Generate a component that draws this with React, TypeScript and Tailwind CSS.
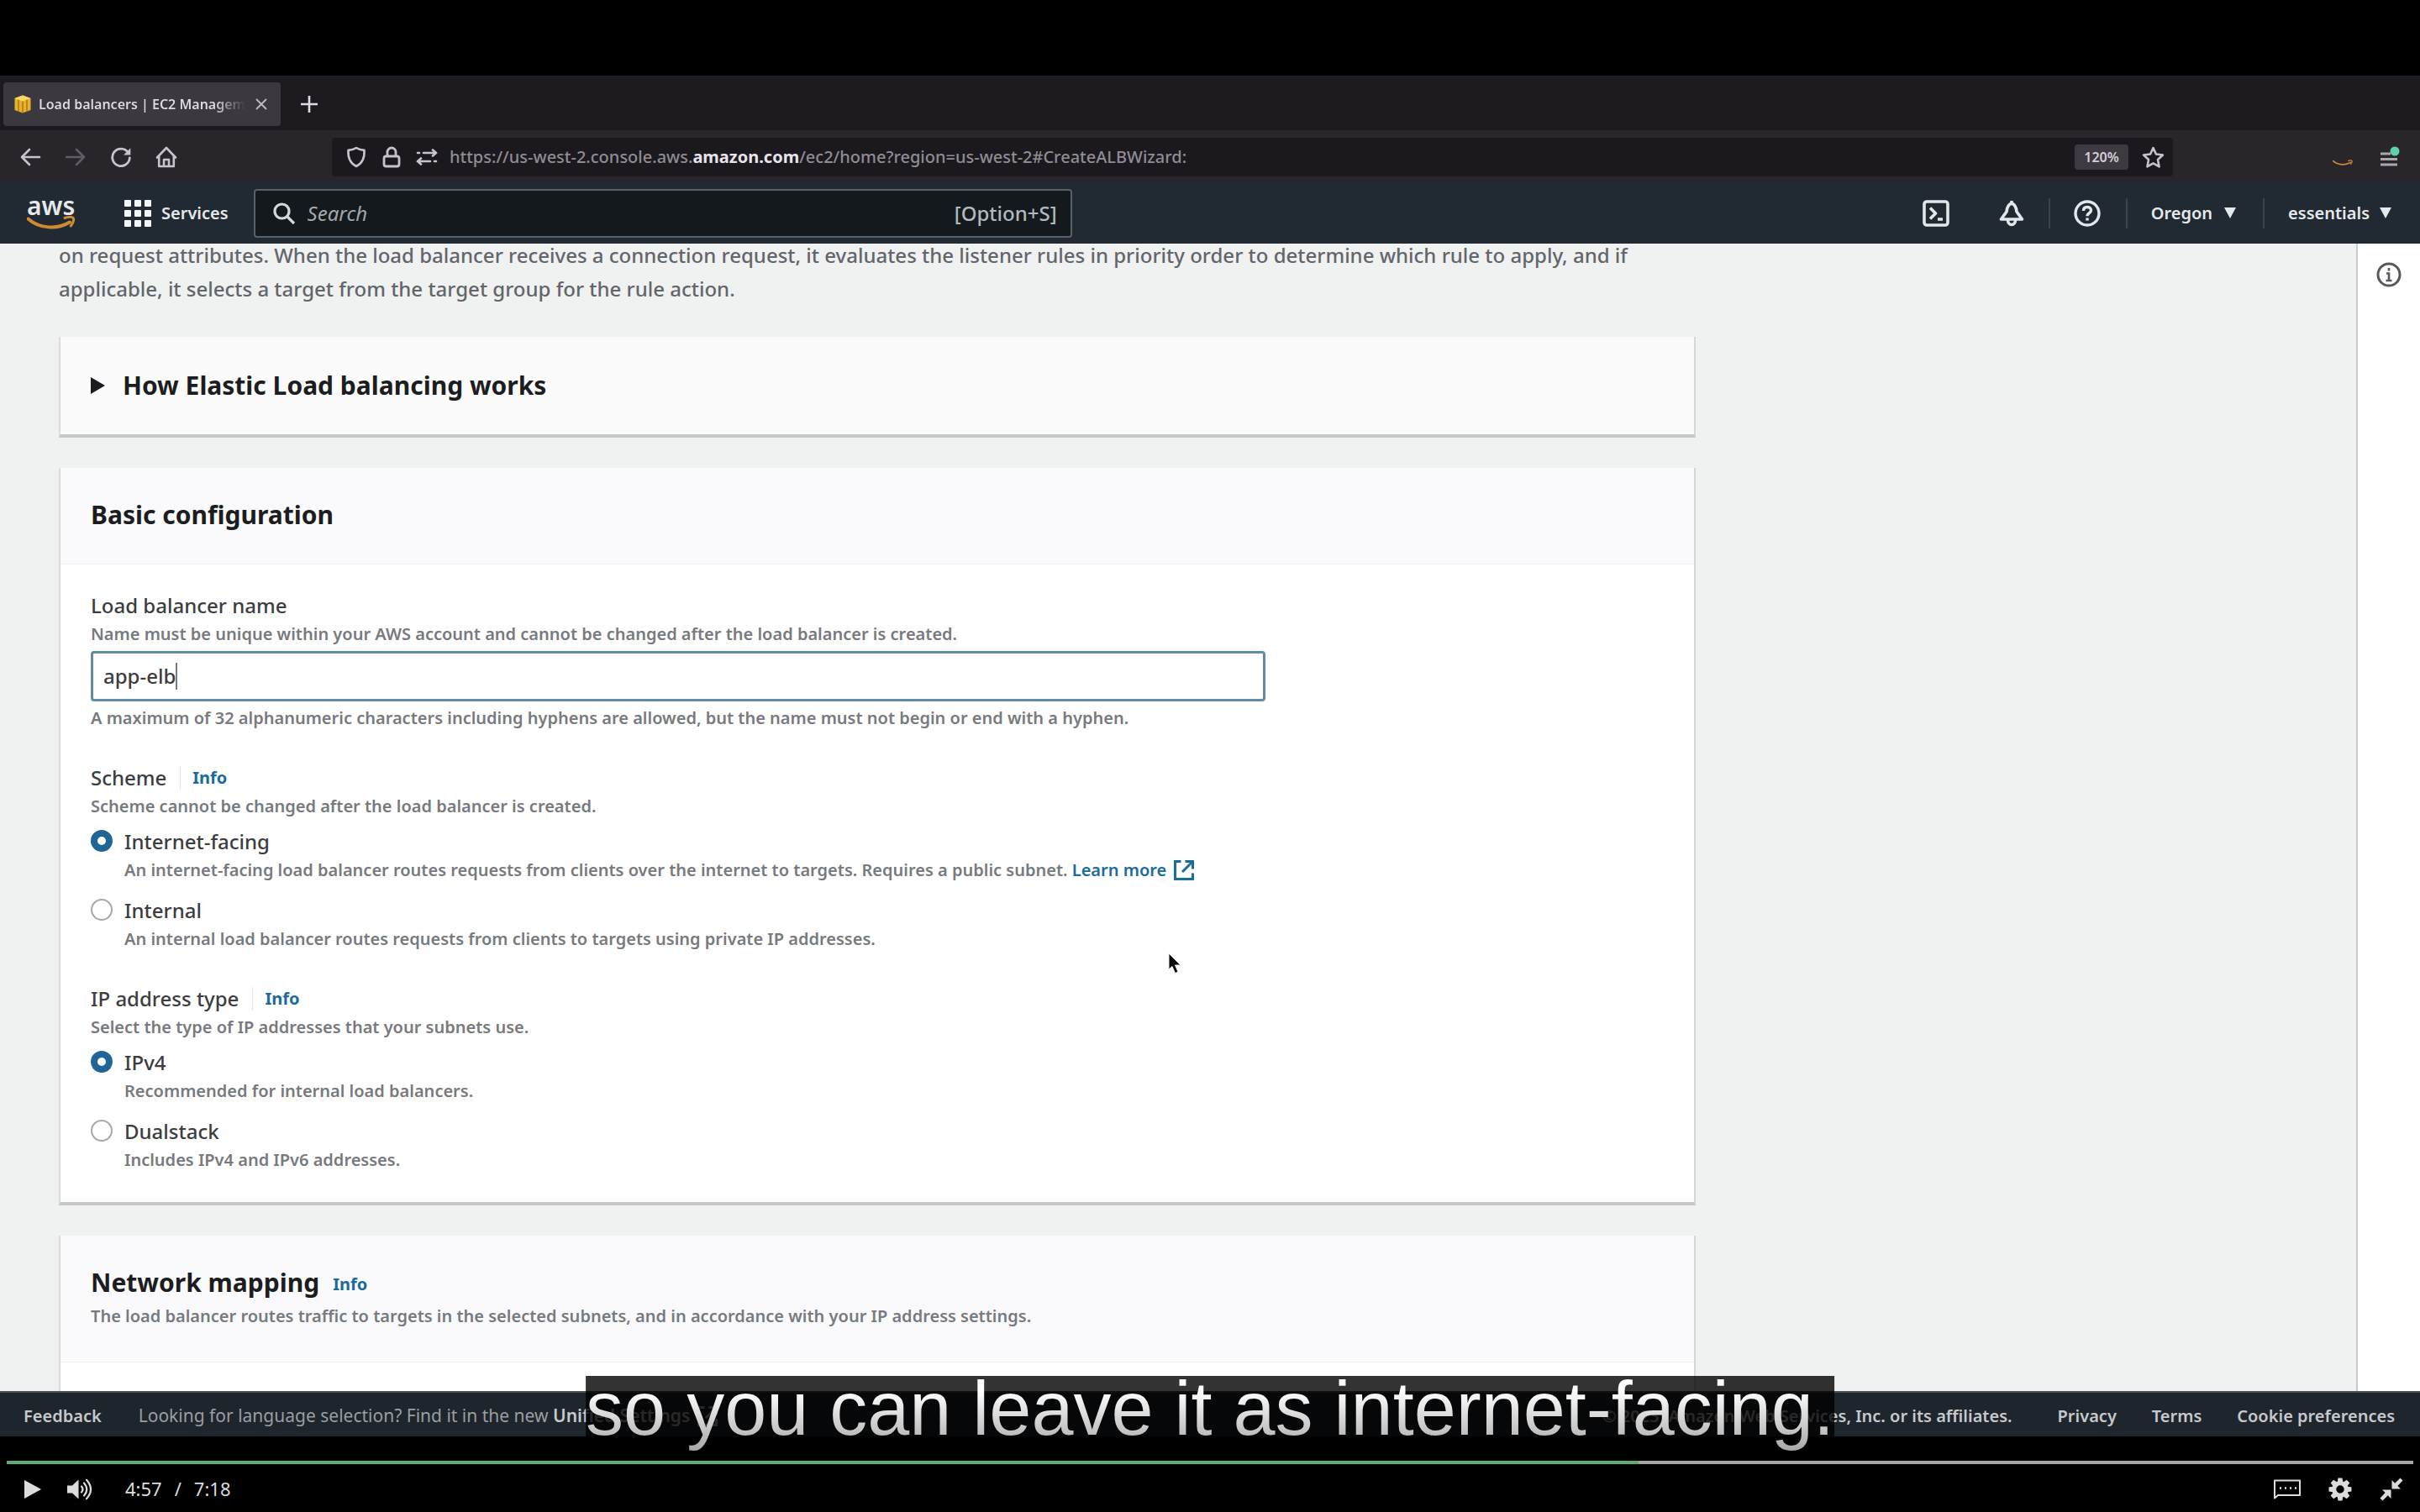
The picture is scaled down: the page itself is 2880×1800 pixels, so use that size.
import React, { useState } from "react";

const FONT = "font-['Noto_Sans',sans-serif]";

type IconProps = { className?: string };

/* ---------- Browser icons ---------- */

function Favicon() {
  return (
    <svg viewBox="0 0 22 22" className="h-[22px] w-[22px] shrink-0" aria-hidden="true">
      <path d="M11 0.5 20.5 4v14L11 21.5 1.5 18V4z" fill="#e8b32c" />
      <path d="M11 0.5 20.5 4 11 7.5 1.5 4z" fill="#f7d862" />
      <path d="M11 7.5v14M6 5.8v13.6M16 5.8v13.6" stroke="#a87410" strokeWidth="1.4" fill="none" />
    </svg>
  );
}

function Arrow({ className = "" }: IconProps) {
  return (
    <svg viewBox="0 0 26 26" className={`h-[26px] w-[26px] ${className}`} fill="none" stroke="currentColor" strokeWidth="2.6" strokeLinecap="round" strokeLinejoin="round" aria-hidden="true">
      <path d="M24 13H3M12 4l-9 9 9 9" />
    </svg>
  );
}

function Reload() {
  return (
    <svg viewBox="0 0 26 26" className="h-[26px] w-[26px]" fill="none" stroke="currentColor" strokeWidth="2.8" strokeLinecap="round" aria-hidden="true">
      <path d="M21.5 7.5A10.3 10.3 0 1 0 23.3 14" />
      <path d="M24.3 2.2v8.2h-8.2z" fill="currentColor" stroke="none" />
    </svg>
  );
}

function Home() {
  return (
    <svg viewBox="0 0 26 26" className="h-[26px] w-[26px]" fill="none" stroke="currentColor" strokeWidth="2.6" strokeLinejoin="round" strokeLinecap="round" aria-hidden="true">
      <path d="M2 13.5 13 2l11 11.5M4.2 12v12h17.6V12" />
      <path d="M10 23.5V16h6v7.5" />
    </svg>
  );
}

function ShieldIcon() {
  return (
    <svg viewBox="0 0 26 26" className="h-[26px] w-[26px]" fill="none" stroke="currentColor" strokeWidth="2.6" strokeLinejoin="round" aria-hidden="true">
      <path d="M13 2c3 2 6.5 2.7 9.5 2.9.6 8.5-2.6 15.6-9.5 19.1C6.1 20.5 2.9 13.4 3.5 4.9 6.5 4.7 10 4 13 2z" />
    </svg>
  );
}

function LockIcon() {
  return (
    <svg viewBox="0 0 26 26" className="h-[26px] w-[26px]" fill="none" stroke="currentColor" strokeWidth="2.8" strokeLinejoin="round" aria-hidden="true">
      <rect x="4" y="12" width="18" height="12" rx="2.5" />
      <path d="M8 12V7a5 5 0 0 1 10 0v5" />
    </svg>
  );
}

function PermissionsIcon() {
  return (
    <svg viewBox="0 0 26 26" className="h-[26px] w-[26px]" fill="none" stroke="currentColor" strokeWidth="2.6" strokeLinecap="round" aria-hidden="true">
      <path d="M9 8h15M20 4.5 24 8l-4 3.5M2 8h2M17 18H2M6 14.5 2 18l4 3.5M22 18h2" />
    </svg>
  );
}

function StarIcon() {
  return (
    <svg viewBox="0 0 26 26" className="h-[27px] w-[27px]" fill="none" stroke="currentColor" strokeWidth="2.5" strokeLinejoin="round" aria-hidden="true">
      <path d="m13 2 3.3 7.2 7.7.9-5.7 5.3 1.5 8.1L13 19.7l-6.8 3.8 1.5-8.1L2 10.1l7.7-.9z" />
    </svg>
  );
}

function Smile({ className = "" }: IconProps) {
  return (
    <svg viewBox="0 0 58 18" className={className} fill="none" stroke="#d08a32" aria-hidden="true">
      <path d="M1.5 3.5C15 15.5 36 16.5 51 7.5" strokeWidth="4" strokeLinecap="round" />
      <path d="M45 2.5c4.5-1.3 9-1.2 10.3.3 1 1.3-.4 6-3 9.2" strokeWidth="3" strokeLinecap="round" />
    </svg>
  );
}

function MenuIcon() {
  return (
    <svg viewBox="0 0 24 26" className="h-[26px] w-[24px]" aria-hidden="true">
      <path d="M1 9h12M1 15.5h20M1 22h20" stroke="#a9a7ad" strokeWidth="3" fill="none" />
      <circle cx="18" cy="6" r="5.5" fill="#5fd0a8" />
    </svg>
  );
}

/* ---------- Console icons ---------- */

function GridIcon() {
  const steps = [0, 12, 24];
  return (
    <svg viewBox="0 0 32 32" className="h-8 w-8" fill="#f2f4f5" aria-hidden="true">
      {steps.map((y) => steps.map((x) => <rect key={`${x}-${y}`} x={x} y={y} width="8" height="8" rx="1" />))}
    </svg>
  );
}

function SearchIcon() {
  return (
    <svg viewBox="0 0 28 28" className="h-7 w-7 shrink-0" fill="none" stroke="#d5d8da" strokeWidth="3.2" aria-hidden="true">
      <circle cx="11.5" cy="11.5" r="8.5" />
      <path d="m17.5 17.5 8.500 8.500" />
    </svg>
  );
}

function TerminalIcon() {
  return (
    <svg viewBox="0 0 32 32" className="h-8 w-8" fill="none" stroke="#e3e7ea" strokeWidth="3.6" strokeLinejoin="round" aria-hidden="true">
      <rect x="2" y="2" width="28" height="28" rx="3" />
      <path d="m9 9.5 6.5 6.5L9 22.5M18 23h6" />
    </svg>
  );
}

function BellIcon() {
  return (
    <svg viewBox="0 0 32 32" className="h-8 w-8" fill="none" stroke="#e3e7ea" strokeWidth="3.6" strokeLinejoin="round" aria-hidden="true">
      <path d="M16 4c-4.5 1.500-5.500 5-6 10L3.500 23h25L22 14c-.5-5-1.500-8.500-6-10z" />
      <path d="M16 1v3M11.500 24a4.500 5.500 0 0 0 9 0" />
    </svg>
  );
}

function HelpIcon() {
  return (
    <svg viewBox="0 0 32 32" className="h-8 w-8" fill="none" stroke="#e3e7ea" strokeWidth="3.4" aria-hidden="true">
      <circle cx="16" cy="16" r="14" />
      <path d="M11.5 13c0-3 2-4.500 4.500-4.500s4.500 1.500 4.500 4c0 3-4.500 3.300-4.500 6.700M16 21.500v3" />
    </svg>
  );
}

function Caret({ className = "" }: IconProps) {
  return (
    <svg viewBox="0 0 14 13" className={`h-[13px] w-[14px] ${className}`} fill="currentColor" aria-hidden="true">
      <path d="M0 0h14L7 13z" />
    </svg>
  );
}

function InfoIcon() {
  return (
    <svg viewBox="0 0 30 30" className="h-[30px] w-[30px]" fill="none" stroke="#55595e" strokeWidth="3" aria-hidden="true">
      <circle cx="15" cy="15" r="13" />
      <path d="M15 7v3.5M12 13.5h3V22M11.5 22h7" strokeWidth="2.6" />
    </svg>
  );
}

function ExternalIcon() {
  return (
    <svg viewBox="0 0 26 26" className="h-[26px] w-[26px]" fill="none" stroke="currentColor" strokeWidth="3" aria-hidden="true">
      <path d="M9.5 2.5h-7v21h21v-7M14.5 2.5h9v9M23 3 11 15" />
    </svg>
  );
}

/* ---------- Player icons ---------- */

function PlayIcon() {
  return (
    <svg viewBox="0 0 22 22" className="h-[22px] w-[22px]" fill="#dcdcdc" aria-hidden="true">
      <path d="M1 0v22l20-11z" />
    </svg>
  );
}

function VolumeIcon() {
  return (
    <svg viewBox="0 0 32 26" className="h-[26px] w-8" fill="none" stroke="#dcdcdc" strokeWidth="2.2" strokeLinecap="round" aria-hidden="true">
      <path d="M1 8.5h6L14.5 1.5v23L7 17.5H1z" fill="#dcdcdc" stroke="none" />
      <path d="M18 9.5q3 3.5 0 7M21 5.5q6.5 7.5 0 15M24 1.8q10 11.2 0 22.4" />
    </svg>
  );
}

function CaptionsIcon() {
  return (
    <svg viewBox="0 0 32 24" className="h-6 w-8" fill="none" stroke="#dcdcdc" strokeWidth="2" strokeLinejoin="round" aria-hidden="true">
      <path d="M1 1.5h30v17.5H5L1 22.5z" />
      <path d="M7 10.5h2M13 10.5h2M19 10.5h2M25 10.5h2" strokeWidth="2.6" />
    </svg>
  );
}

function GearIcon() {
  const teeth = [0, 45, 90, 135, 180, 225, 270, 315];
  return (
    <svg viewBox="0 0 28 28" className="h-7 w-7" aria-hidden="true">
      <g fill="#dcdcdc">
        {teeth.map((a) => (
          <path key={a} d="M10.5 6 11.5 0.5h5L17.5 6z" transform={`rotate(${a} 14 14)`} />
        ))}
      </g>
      <circle cx="14" cy="14" r="7.2" fill="none" stroke="#dcdcdc" strokeWidth="5" />
    </svg>
  );
}

function ShrinkIcon() {
  return (
    <svg viewBox="0 0 28 28" className="h-7 w-7" fill="#dcdcdc" aria-hidden="true">
      <path d="M14.5 3v10.5H25l-3.6-3.6L27.5 3.5 24.5.5l-6.3 6.2z" />
      <path d="M13.5 25V14.5H3l3.6 3.6L.5 24.5l3 3 6.3-6.2z" />
    </svg>
  );
}

function Pointer() {
  return (
    <svg viewBox="0 0 16 26" className="absolute top-[844px] left-[1390px] h-[26px] w-4" aria-hidden="true">
      <path d="M1 1v19l4-3.5 3.5 8 3.5-1.5-3.5-8H15z" fill="#0b0b0b" stroke="#f2f2f2" strokeWidth="1" />
    </svg>
  );
}

/* ---------- Browser chrome ---------- */

function TabStrip() {
  return (
    <div className="flex h-[65px] items-center bg-[#1c1a1f] pt-0.5 pl-1 text-[#dedce2]">
      <div className="flex h-[52px] w-[330px] items-center rounded-sm bg-[#3b383f] pr-4 pl-3">
        <Favicon />
        <span className="ml-2 bg-linear-to-r from-[#dedce2] from-85% to-[#3b383f] bg-clip-text text-base font-semibold whitespace-nowrap text-transparent">
          Load balancers | EC2 Managem
        </span>
        <button type="button" aria-label="Close tab" className="ml-auto">
          <svg viewBox="0 0 14 14" className="h-3.5 w-3.5" stroke="#bdbbc2" strokeWidth="1.8" aria-hidden="true">
            <path d="m1 1 12 12M13 1 1 13" />
          </svg>
        </button>
      </div>
      <button type="button" aria-label="New tab" className="ml-6">
        <svg viewBox="0 0 20 20" className="h-5 w-5" stroke="#dedce2" strokeWidth="2.6" aria-hidden="true">
          <path d="M10 0v20M0 10h20" />
        </svg>
      </button>
    </div>
  );
}

function Toolbar() {
  return (
    <div className="flex h-[62px] items-center bg-[#28252b] pt-0.5 pr-6 pl-[23px] text-[#c6c4ca]">
      <div className="flex w-[372px] items-center gap-7">
        <button type="button" aria-label="Back"><Arrow /></button>
        <button type="button" aria-label="Forward"><Arrow className="rotate-180 text-[#5f5c64]" /></button>
        <button type="button" aria-label="Reload"><Reload /></button>
        <button type="button" aria-label="Home"><Home /></button>
      </div>
      <div className="flex h-[46px] min-w-0 flex-1 items-center rounded bg-[#1b191e] pr-2.5 pl-4">
        <div className="flex shrink-0 items-center gap-4">
          <ShieldIcon />
          <LockIcon />
          <PermissionsIcon />
        </div>
        <span className="ml-3.5 flex-1 overflow-hidden text-xl font-medium whitespace-nowrap text-[#8f8c94]">
          https://us-west-2.console.aws.
          <span className="font-bold text-[#e6e4ea]">amazon.com</span>
          /ec2/home?region=us-west-2#CreateALBWizard:
        </span>
        <button type="button" className="mr-4 h-[30px] w-[64px] rounded bg-[#3d3a42] text-base font-semibold text-[#d2d0d6]">120%</button>
        <button type="button" aria-label="Bookmark this page"><StarIcon /></button>
      </div>
      <button type="button" aria-label="Extension" className="ml-[190px] pt-3.5"><Smile className="h-2.5 w-6" /></button>
      <button type="button" aria-label="Open menu" className="ml-8"><MenuIcon /></button>
    </div>
  );
}

/* ---------- Console header and footer ---------- */

function ConsoleHeader() {
  return (
    <header className="flex h-[73px] items-center bg-[#212a33] pl-8 text-xl font-semibold text-[#e6e9eb]">
      <a href="#home" aria-label="AWS home" className="flex w-[60px] flex-col">
        <span className="text-3xl leading-6">aws</span>
        <Smile className="h-[18px] w-[58px]" />
      </a>
      <button type="button" className="ml-14 flex items-center gap-3">
        <GridIcon />
        Services
      </button>
      <label className="ml-[30px] flex h-[58px] w-[974px] items-center rounded border-2 border-[#596066] bg-[#13191d] pr-4 pl-5 font-normal">
        <SearchIcon />
        <input type="search" aria-label="Search" placeholder="Search" className="ml-3.5 min-w-0 flex-1 bg-transparent text-2xl italic outline-none placeholder:text-[#a3a8ab]" />
        <span className="text-2xl font-medium text-[#b4b9bc]">[Option+S]</span>
      </label>
      <div className="ml-auto flex items-center">
        <button type="button" aria-label="CloudShell" className="mr-[58px]"><TerminalIcon /></button>
        <button type="button" aria-label="Notifications" className="mr-7"><BellIcon /></button>
        <span className="mr-7 h-9 border-l-2 border-[#39434d]" />
        <button type="button" aria-label="Help" className="mr-[30px]"><HelpIcon /></button>
        <span className="mr-7 h-9 border-l-2 border-[#39434d]" />
        <button type="button" className="mr-8 flex items-center gap-3.5">Oregon<Caret /></button>
        <span className="mr-7 h-9 border-l-2 border-[#39434d]" />
        <button type="button" className="mr-[34px] flex items-center gap-3">essentials<Caret /></button>
      </div>
    </header>
  );
}

function ConsoleFooter() {
  return (
    <footer className="flex h-[54px] shrink-0 items-center border-t-2 border-[#4a5258] bg-[#1e252c] pt-1 pr-[30px] pl-7 text-xl font-semibold whitespace-nowrap text-[#c6c9cc]">
      <a href="#feedback">Feedback</a>
      <p className="ml-11 text-[21px] font-normal text-[#999ea2]">
        Looking for language selection? Find it in the new{" "}
        <a href="#settings" className="inline-flex items-center gap-2 font-semibold text-[#c6c9cc]">
          Unified Settings
          <ExternalIcon />
        </a>
      </p>
      <span className="ml-auto">© 2023, Amazon Web Services, Inc. or its affiliates.</span>
      <a href="#privacy" className="ml-[54px]">Privacy</a>
      <a href="#terms" className="ml-[42px]">Terms</a>
      <a href="#cookies" className="ml-[42px]">Cookie preferences</a>
    </footer>
  );
}

/* ---------- Page content ---------- */

const HINT = "text-xl leading-8 font-semibold text-[#777a7e]";
const LABEL = "text-2xl leading-9 font-medium text-[#3b3d41]";
const CARD = "border-b-4 border-l-2 border-b-[#c6c7ca] border-l-[#dcdcdf] border-r-2 border-r-[#d6d7da] bg-white";

function InfoLink({ className = "" }: IconProps) {
  return <a href="#info" className={`text-xl font-bold text-[#1b6b9c] ${className}`}>Info</a>;
}

type Choice = { value: string; label: string; hint: React.ReactNode };

function RadioSet({ name, title, hint, choices, initial }: { name: string; title: string; hint: string; choices: Choice[]; initial: string }) {
  const [selected, setSelected] = useState(initial);
  return (
    <div role="radiogroup" aria-labelledby={`${name}-title`}>
      <div className="flex h-9 items-center">
        <span id={`${name}-title`} className={LABEL}>{title}</span>
        <InfoLink className="ml-4 border-l border-[#e4e5e7] pl-3.5" />
      </div>
      <p className={HINT}>{hint}</p>
      <div className="mt-2 flex flex-col gap-3.5">
        {choices.map((c) => (
          <div key={c.value} className="flex items-start gap-3.5">
            <input
              type="radio"
              id={`${name}-${c.value}`}
              name={name}
              checked={selected === c.value}
              onChange={() => setSelected(c.value)}
              className="mt-1 h-[26px] w-[26px] shrink-0 appearance-none rounded-full border-2 border-[#a5a8ac] bg-white checked:border-8 checked:border-[#1f6596]"
            />
            <div>
              <label htmlFor={`${name}-${c.value}`} className={`block ${LABEL}`}>{c.label}</label>
              <p className={HINT}>{c.hint}</p>
            </div>
          </div>
        ))}
      </div>
    </div>
  );
}

const schemes: Choice[] = [
  {
    value: "internet-facing",
    label: "Internet-facing",
    hint: (
      <>
        An internet-facing load balancer routes requests from clients over the internet to targets. Requires a public subnet.{" "}
        <a href="#learn" className="inline-flex h-8 items-center gap-2 align-top text-[#1b6b9c]">
          Learn more
          <ExternalIcon />
        </a>
      </>
    ),
  },
  { value: "internal", label: "Internal", hint: "An internal load balancer routes requests from clients to targets using private IP addresses." },
];

const ipTypes: Choice[] = [
  { value: "ipv4", label: "IPv4", hint: "Recommended for internal load balancers." },
  { value: "dualstack", label: "Dualstack", hint: "Includes IPv4 and IPv6 addresses." },
];

function Content() {
  const heading = "text-3xl leading-10 font-bold text-[#1c1d21]";
  return (
    <div className="relative flex min-h-0 flex-1 overflow-hidden bg-[#f0f1f1]">
      <main className="min-w-0 flex-1 pr-[786px] pl-[70px]">
        <p className="-mt-1.5 text-2xl leading-10 font-medium text-[#62666b]">
          on request attributes. When the load balancer receives a connection request, it evaluates the listener rules in priority order to determine which rule to apply, and if applicable, it selects a target from the target group for the rule action.
        </p>

        <section className={`mt-[37px] bg-[#fbfbfc] ${CARD}`}>
          <button type="button" className="flex w-full items-center bg-[#fbfbfc] py-[38px] pl-9 text-left">
            <svg viewBox="0 0 17 20" className="h-5 w-[17px]" fill="#1c1d21" aria-hidden="true">
              <path d="M0 0v20l17-10z" />
            </svg>
            <h2 className={`ml-[21px] ${heading}`}>How Elastic Load balancing works</h2>
          </button>
        </section>

        <section className={`mt-9 ${CARD}`}>
          <div className="border-b border-[#f0f0f2] bg-[#fafafc] px-9 pt-9 pb-[38px]">
            <h2 className={heading}>Basic configuration</h2>
          </div>
          <div className="flex flex-col gap-[37px] px-9 pt-[31px] pb-[34px]">
            <div className="flex w-[1398px] flex-col">
              <label htmlFor="lb-name" className={LABEL}>Load balancer name</label>
              <p className={HINT}>Name must be unique within your AWS account and cannot be changed after the load balancer is created.</p>
              <div className="mt-1 flex h-[60px] items-center rounded border-3 border-[#5f8ea3] bg-white px-3">
                <input id="lb-name" type="text" defaultValue="app-elb" className="field-sizing-content bg-transparent text-2xl font-medium text-[#3b3d41] outline-none" />
                <span className="h-8 border-l-2 border-[#777a7e]" />
              </div>
              <p className={`mt-1 ${HINT}`}>A maximum of 32 alphanumeric characters including hyphens are allowed, but the name must not begin or end with a hyphen.</p>
            </div>
            <RadioSet name="scheme" title="Scheme" hint="Scheme cannot be changed after the load balancer is created." choices={schemes} initial="internet-facing" />
            <RadioSet name="ip-type" title="IP address type" hint="Select the type of IP addresses that your subnets use." choices={ipTypes} initial="ipv4" />
          </div>
        </section>

        <section className={`mt-9 pb-40 ${CARD}`}>
          <div className="border-b border-[#f0f0f2] bg-[#fafafc] px-9 pt-9 pb-[38px]">
            <div className="flex items-center">
              <h2 className={heading}>Network mapping</h2>
              <InfoLink className="ml-4 pt-1" />
            </div>
            <p className={`mt-1 ${HINT}`}>The load balancer routes traffic to targets in the selected subnets, and in accordance with your IP address settings.</p>
          </div>
        </section>
      </main>
      <aside className="flex w-[76px] justify-center border-l-2 border-[#c9cbce] bg-white pt-[22px]">
        <button type="button" aria-label="Open help panel" className="h-[30px]"><InfoIcon /></button>
      </aside>
      <Pointer />
    </div>
  );
}

/* ---------- Video player ---------- */

function Captions() {
  return (
    <div className="absolute top-full left-1/2 -mt-[72px] h-[90px] -translate-x-1/2 bg-black/80 whitespace-nowrap">
      <span className="block h-[90px] bg-linear-to-b from-white from-20% to-[#a6a6a6] bg-clip-text font-['Liberation_Sans',sans-serif] text-[90px] leading-[78px] text-transparent">
        so you can leave it as internet-facing.
      </span>
    </div>
  );
}

function PlayerControls() {
  const [position, setPosition] = useState(297);
  const duration = 438;
  const percent = (position / duration) * 100;
  return (
    <div className="h-[90px] shrink-0 px-2 pt-[29px]">
      <input
        type="range"
        aria-label="Seek"
        min={0}
        max={duration}
        value={position}
        onChange={(e) => setPosition(Number(e.target.value))}
        className="block h-1 w-full appearance-none [&::-webkit-slider-thumb]:h-0 [&::-webkit-slider-thumb]:w-0 [&::-webkit-slider-thumb]:appearance-none"
        style={{ background: `linear-gradient(to right, #5cad72 ${percent}%, #a5a5a5 ${percent}%)` }}
      />
      <div className="flex h-[57px] items-center pt-0.5 pr-3 pl-5">
        <button type="button" aria-label="Play"><PlayIcon /></button>
        <button type="button" aria-label="Mute" className="ml-[29px]"><VolumeIcon /></button>
        <div className="ml-[38px] flex gap-[15px] text-[22px] text-[#dcdcdc]">
          <span>4:57</span>
          <span>/</span>
          <span>7:18</span>
        </div>
        <div className="ml-auto flex items-center gap-[33px]">
          <button type="button" aria-label="Captions"><CaptionsIcon /></button>
          <button type="button" aria-label="Settings"><GearIcon /></button>
          <button type="button" aria-label="Exit full screen"><ShrinkIcon /></button>
        </div>
      </div>
    </div>
  );
}

export default function App() {
  return (
    <div className={`flex h-screen flex-col overflow-hidden bg-black pt-[90px] ${FONT}`}>
      <div className="relative flex min-h-0 flex-1 flex-col">
        <div className="shrink-0">
          <TabStrip />
          <Toolbar />
          <ConsoleHeader />
        </div>
        <Content />
        <ConsoleFooter />
        <Captions />
      </div>
      <PlayerControls />
    </div>
  );
}
